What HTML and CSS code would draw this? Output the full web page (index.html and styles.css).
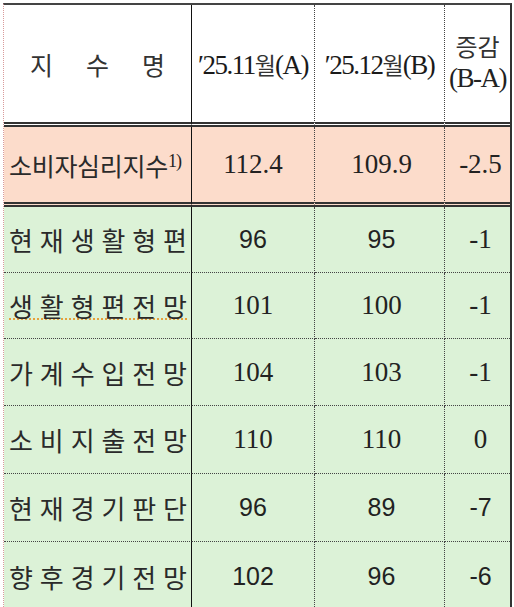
FILE: index.html
```html
<!DOCTYPE html>
<html lang="ko">
<head>
<meta charset="utf-8">
<link rel="stylesheet" href="styles.css">
</head>
<body>
<div class="grid">
  <div class="cell c1 hd"><span class="hname"><span>지</span><span>수</span><span>명</span></span></div>
  <div class="cell c2 hd"><span class="hdate">′25.11<span class="ko">월</span>(A)</span></div>
  <div class="cell c3 hd"><span class="hdate">′25.12<span class="ko">월</span>(B)</span></div>
  <div class="cell c4 hd hdiff"><span class="ko">증감</span><span class="hba">(B-A)</span></div>

  <div class="cell c1 pk"><span class="pkname">소비자심리지수</span><sup class="note">1)</sup></div>
  <div class="cell c2 pk num">112.4</div>
  <div class="cell c3 pk num">109.9</div>
  <div class="cell c4 pk num">-2.5</div>

  <div class="cell c1 gr"><span class="gname"><span>현</span><span>재</span><span>생</span><span>활</span><span>형</span><span>편</span></span></div>
  <div class="cell c2 gr num sans">96</div>
  <div class="cell c3 gr num sans">95</div>
  <div class="cell c4 gr num">-1</div>

  <div class="cell c1 gr"><span class="gname wavy"><span>생</span><span>활</span><span>형</span><span>편</span><span>전</span><span>망</span></span></div>
  <div class="cell c2 gr num">101</div>
  <div class="cell c3 gr num">100</div>
  <div class="cell c4 gr num">-1</div>

  <div class="cell c1 gr"><span class="gname"><span>가</span><span>계</span><span>수</span><span>입</span><span>전</span><span>망</span></span></div>
  <div class="cell c2 gr num">104</div>
  <div class="cell c3 gr num">103</div>
  <div class="cell c4 gr num">-1</div>

  <div class="cell c1 gr"><span class="gname"><span>소</span><span>비</span><span>지</span><span>출</span><span>전</span><span>망</span></span></div>
  <div class="cell c2 gr num">110</div>
  <div class="cell c3 gr num">110</div>
  <div class="cell c4 gr num">0</div>

  <div class="cell c1 gr"><span class="gname"><span>현</span><span>재</span><span>경</span><span>기</span><span>판</span><span>단</span></span></div>
  <div class="cell c2 gr num sans">96</div>
  <div class="cell c3 gr num sans">89</div>
  <div class="cell c4 gr num sans">-7</div>

  <div class="cell c1 gr last"><span class="gname"><span>향</span><span>후</span><span>경</span><span>기</span><span>전</span><span>망</span></span></div>
  <div class="cell c2 gr last num sans">102</div>
  <div class="cell c3 gr last num sans">96</div>
  <div class="cell c4 gr last num sans">-6</div>
</div>
</body>
</html>
```
FILE: styles.css
```css
html, body {
  margin: 0;
  padding: 0;
  background: #ffffff;
}

body {
  font-family: "Liberation Serif", "Noto Sans CJK KR", serif;
  color: #222;
  overflow: hidden;
}

.grid {
  display: grid;
  grid-template-columns: 188px 123px 130px 65px;
  grid-template-rows: 122px 80px 66px 66px 67px 68px 68px 69px;
  width: max-content;
  margin: 3px 0 0 3px;
  border-left: 1px dotted #d99a9a;
  border-top: 2px solid #444;
  border-right: 2px solid #333;
}

.cell {
  box-sizing: border-box;
  display: flex;
  align-items: center;
  justify-content: center;
  overflow: hidden;
}

.c1 { border-right: 1px solid #111; }
.c2, .c3 { border-right: 1px dotted #444; }

.hd { background: #fff; border-bottom: 5px double #333; }
.pk { background: #fcdccb; border-bottom: 5px double #333; }
.gr { background: #dcf2d7; border-bottom: 1px dotted #444; }
.gr.last { border-bottom: none; }

.ko {
  font-family: "Noto Sans CJK KR", sans-serif;
}

.hname {
  display: flex;
  gap: 33px;
  font-family: "Noto Sans CJK KR", sans-serif;
  font-size: 25px;
  color: #333;
}

.hdate {
  font-size: 27px;
  letter-spacing: -1.5px;
  white-space: nowrap;
  color: #1a1a1a;
}
.hdate .ko {
  font-size: 23px;
  color: #333;
  letter-spacing: -1px;
}

.hdiff {
  flex-direction: column;
  padding-bottom: 4px;
  line-height: 32px;
}
.hdiff .ko {
  font-size: 24px;
  letter-spacing: 0;
  color: #333;
}
.hba {
  font-size: 27px;
  letter-spacing: -1.5px;
  white-space: nowrap;
}

.c1.pk, .c1.gr {
  justify-content: flex-start;
  padding-left: 5px;
}

.pkname {
  font-family: "Noto Sans CJK KR", sans-serif;
  font-size: 25px;
  letter-spacing: -0.3px;
  color: #2a2a2a;
}
.note {
  font-family: "Liberation Serif", serif;
  font-size: 18px;
  line-height: 20px;
  align-self: flex-start;
  margin-top: 24px;
  letter-spacing: -1px;
}

.gname {
  display: flex;
  justify-content: space-between;
  width: 178px;
  font-family: "Noto Sans CJK KR", sans-serif;
  font-size: 26px;
  color: #2a2a2a;
  white-space: nowrap;
}
.wavy {
  line-height: 24px;
  margin-top: 2px;
  border-bottom: 2px dotted #e6a03c;
}

.num {
  font-size: 27px;
  color: #222;
}
.num.sans {
  font-family: "Liberation Sans", sans-serif;
  font-size: 25px;
}
.c3.num { padding-left: 4px; }
.c4.num { padding-left: 6px; }
```
